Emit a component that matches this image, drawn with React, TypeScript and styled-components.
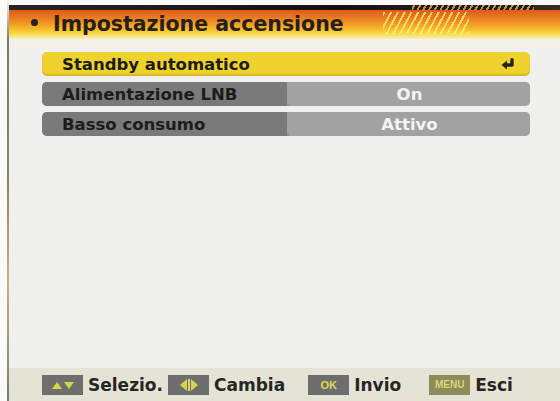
import styled, { createGlobalStyle } from "styled-components";

const GlobalStyle = createGlobalStyle`
  html, body {
    margin: 0;
    padding: 0;
    background: #f8f8f6;
  }
  body {
    font-family: "DejaVu Sans", "Liberation Sans", sans-serif;
  }
`;

const Screen = styled.div`
  width: 560px;
  height: 401px;
  display: flex;
  overflow: hidden;
  background: #f8f8f6;
`;

const Margin = styled.div`
  width: 7px;
  flex-shrink: 0;
  background: #fafaf8;
`;

const Bezel = styled.div`
  width: 2px;
  flex-shrink: 0;
  background: linear-gradient(to bottom, #f4f4f0 0%, #7a7a6c 10%, #8a8460 45%, #c0b878 70%, #7a7a6c 100%);
`;

const Main = styled.div`
  flex: 1;
  display: flex;
  flex-direction: column;
  background: #efefee;
`;

const TopGap = styled.div`
  height: 5px;
  background: #fafaf8;
`;

const TopLine = styled.div`
  height: 5px;
  display: flex;
  justify-content: flex-end;
  padding-right: 26px;
  background: linear-gradient(to right, #2a2220 0%, #141010 60%, #3a2a20 100%);
`;

const LineStripes = styled.div`
  width: 122px;
  height: 100%;
  background: repeating-linear-gradient(
    -60deg,
    #c08a50 0px,
    #c08a50 2px,
    #241a14 2px,
    #241a14 5px
  );
`;

const Header = styled.div`
  height: 29px;
  display: flex;
  align-items: center;
  padding-left: 22px;
  gap: 15px;
  background: linear-gradient(
    to bottom,
    #dc5a18 0%,
    #ea8022 30%,
    #f4ac28 58%,
    #f8d83e 80%,
    #f6eec4 100%
  );
`;

const Bullet = styled.span`
  width: 7px;
  height: 7px;
  border-radius: 50%;
  background: #222;
  margin-top: -4px;
`;

const Title = styled.h1`
  margin: 0;
  margin-top: -2px;
  font-size: 20.5px;
  font-weight: bold;
  color: #262018;
`;

const Stripes = styled.div`
  width: 86px;
  height: 22px;
  margin-left: 24px;
  margin-top: -4px;
  background: repeating-linear-gradient(
    -62deg,
    rgba(255, 240, 120, 0.75) 0px,
    rgba(255, 240, 120, 0.75) 2px,
    transparent 2px,
    transparent 6px
  );
`;

const Content = styled.div`
  flex: 1;
  display: flex;
  flex-direction: column;
  gap: 6px;
  padding: 13px 30px 0 33px;
  background: linear-gradient(to bottom, #f6f2e0 0px, #f0f0ef 10px, #efefee 100%);
`;

const Row = styled.div<{ $active?: boolean }>`
  height: 24px;
  display: flex;
  border-radius: 5px;
  overflow: hidden;
  background: ${(p) => (p.$active ? "#f0d22e" : "#a2a2a2")};
  box-shadow: inset 0 -2px 2px rgba(0, 0, 0, 0.12);
`;

const Label = styled.div<{ $active?: boolean }>`
  width: ${(p) => (p.$active ? "auto" : "245px")};
  flex: ${(p) => (p.$active ? "1" : "none")};
  display: flex;
  align-items: center;
  padding-left: 20px;
  box-sizing: border-box;
  font-size: 16.5px;
  font-weight: bold;
  color: #1c1c1a;
  background: ${(p) => (p.$active ? "transparent" : "#7a7a7a")};
`;

const Value = styled.div`
  flex: 1;
  display: flex;
  align-items: center;
  justify-content: center;
  font-size: 16.5px;
  font-weight: bold;
  color: #f4f4f4;
  margin-left: 2px;
  background: #a2a2a2;
`;

const EnterIcon = styled.svg`
  width: 14px;
  height: 12px;
  align-self: center;
  margin-right: 15px;
`;

const Footer = styled.div`
  height: 33px;
  display: flex;
  align-items: center;
  padding-left: 33px;
  background: #e4e4d6;
`;

const Hint = styled.div<{ $gap: number }>`
  display: flex;
  align-items: center;
  gap: 5px;
  margin-right: ${(p) => p.$gap}px;
`;

const Key = styled.div<{ $menu?: boolean }>`
  width: 41px;
  height: 20px;
  display: flex;
  align-items: center;
  justify-content: center;
  background: ${(p) => (p.$menu ? "#8e8c5a" : "#6e6e6e")};
  font-family: "Liberation Sans", sans-serif;
  font-size: ${(p) => (p.$menu ? "10px" : "11px")};
  font-weight: bold;
  color: ${(p) => (p.$menu ? "#d8d878" : "#e0d850")};
`;

const HintText = styled.span`
  font-size: 17px;
  font-weight: bold;
  color: #262624;
`;

export default function App() {
  return (
    <>
      <GlobalStyle />
      <Screen>
        <Margin />
        <Bezel />
        <Main>
          <TopGap />
          <TopLine>
            <LineStripes />
          </TopLine>
          <Header>
            <Bullet />
            <Title>Impostazione accensione</Title>
            <Stripes />
          </Header>
          <Content>
            <Row $active>
              <Label $active>Standby automatico</Label>
              <EnterIcon viewBox="0 0 14 12">
                <path
                  d="M11 1.8 V7 H5"
                  fill="none"
                  stroke="#2a2418"
                  strokeWidth="3.4"
                  strokeLinecap="round"
                  strokeLinejoin="round"
                />
                <path d="M0.5 7 L6 2.5 V11.5 Z" fill="#2a2418" />
              </EnterIcon>
            </Row>
            <Row>
              <Label>Alimentazione LNB</Label>
              <Value>On</Value>
            </Row>
            <Row>
              <Label>Basso consumo</Label>
              <Value>Attivo</Value>
            </Row>
          </Content>
          <Footer>
            <Hint $gap={5}>
              <Key>
                <svg width="24" height="10" viewBox="0 0 24 10">
                  <path d="M1 9 L6 2 L11 9 Z" fill="#d8d448" />
                  <path d="M13 2 L23 2 L18 9 Z" fill="#d8d448" />
                </svg>
              </Key>
              <HintText>Selezio.</HintText>
            </Hint>
            <Hint $gap={23}>
              <Key>
                <svg width="22" height="14" viewBox="0 0 22 14">
                  <path d="M9 1 L2 7 L9 13 Z" fill="#d8d448" />
                  <path d="M13 1 L20 7 L13 13 Z" fill="#d8d448" />
                  <rect x="10.2" y="1" width="1.6" height="12" fill="#f0ec90" />
                </svg>
              </Key>
              <HintText>Cambia</HintText>
            </Hint>
            <Hint $gap={28}>
              <Key>OK</Key>
              <HintText>Invio</HintText>
            </Hint>
            <Hint $gap={0}>
              <Key $menu>MENU</Key>
              <HintText>Esci</HintText>
            </Hint>
          </Footer>
        </Main>
      </Screen>
    </>
  );
}
